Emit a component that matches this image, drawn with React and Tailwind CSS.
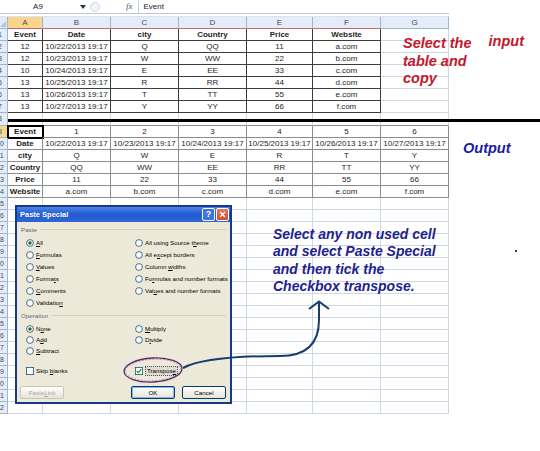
import React from 'react'

const colW = ['w-[35px]', 'w-[68px]', 'w-[68px]', 'w-[68px]', 'w-[66px]', 'w-[68px]', 'w-[68px]']
const letters = ['A', 'B', 'C', 'D', 'E', 'F', 'G']

const input = [
  ['Event', 'Date', 'city', 'Country', 'Price', 'Website'],
  ['12', '10/22/2013 19:17', 'Q', 'QQ', '11', 'a.com'],
  ['12', '10/23/2013 19:17', 'W', 'WW', '22', 'b.com'],
  ['10', '10/24/2013 19:17', 'E', 'EE', '33', 'c.com'],
  ['13', '10/25/2013 19:17', 'R', 'RR', '44', 'd.com'],
  ['13', '10/26/2013 19:17', 'T', 'TT', '55', 'e.com'],
  ['13', '10/27/2013 19:17', 'Y', 'YY', '66', 'f.com'],
]

const output = input[0].map((label, c) => [
  label,
  ...input.slice(1).map((row, r) => (c === 0 ? String(r + 1) : row[c])),
])

function RowHead({ n, active }) {
  return (
    <div
      className={
        'h-full w-[8px] shrink-0 overflow-hidden border-r border-b border-[#9eb6ce] text-[7px] leading-[11px] text-[#3b4b63] ' +
        (active ? 'bg-[#f8d68e]' : 'bg-[#e4ecf7]')
      }
    >
      <div className="-ml-[10px] w-[20px] text-center">{n}</div>
    </div>
  )
}

function Cell({ c, text, bold, tone, active }) {
  let border = 'border-r border-b border-[#d0d7e5]'
  if (tone === 'in') border = 'border-r border-b border-[#3c3c3c]'
  if (tone === 'out') border = 'border-r border-b border-[#8c8c8c]'
  return (
    <div
      className={
        colW[c] +
        ' h-full shrink-0 overflow-visible whitespace-nowrap text-center text-[8px] leading-[11px] text-[#1e1e1e] ' +
        border +
        (bold ? ' font-bold' : '') +
        (active ? ' outline-2 -outline-offset-1 outline-black' : '')
      }
    >
      {text}
    </div>
  )
}

function SheetRow({ n, cells, tone, boldFirst, boldAll, activeHead, activeFirst }) {
  return (
    <div className="flex h-[12px]">
      <RowHead n={n} active={activeHead} />
      {letters.map((_, c) => {
        const has = cells && c < cells.length
        return (
          <Cell
            key={c}
            c={c}
            text={has ? cells[c] : ''}
            bold={has && (boldAll || (boldFirst && c === 0))}
            tone={has ? tone : undefined}
            active={activeFirst && c === 0}
          />
        )
      })}
    </div>
  )
}

function Radio({ on }) {
  return (
    <svg width="8" height="8" viewBox="0 0 8 8" className="shrink-0">
      <circle cx="4" cy="4" r="3.4" fill="#fbfbf8" stroke="#1c5180" strokeWidth="0.8" />
      {on && <circle cx="4" cy="4" r="1.7" fill="#2f6b2f" />}
    </svg>
  )
}

function Check({ on }) {
  return (
    <svg width="8" height="8" viewBox="0 0 8 8" className="shrink-0">
      <rect x="0.4" y="0.4" width="7.2" height="7.2" fill="#fbfbf8" stroke="#1c5180" strokeWidth="0.8" />
      {on && <path d="M1.8 4 L3.3 5.6 L6.3 2.2" fill="none" stroke="#21a121" strokeWidth="1.3" />}
    </svg>
  )
}

function Opt({ on, pre, u, post, h }) {
  return (
    <div className={'flex items-center gap-[2px] whitespace-nowrap pl-[5px] ' + h}>
      <Radio on={on} />
      <span>
        {pre}
        <span className="underline">{u}</span>
        {post}
      </span>
    </div>
  )
}

function Btn({ children, disabled, def, className }) {
  return (
    <div
      className={
        'flex h-[13px] w-[44px] items-center justify-center whitespace-nowrap rounded-[2px] border bg-gradient-to-b from-white to-[#e6e3d6] ' +
        (disabled ? 'border-[#c9c7ba] text-[#aca899] ' : 'border-[#003c74] text-black ') +
        (def ? 'shadow-[inset_0_0_0_1px_#8fb3ea] ' : '') +
        (className || '')
      }
    >
      {children}
    </div>
  )
}

function Group({ label }) {
  return (
    <div className="flex items-center gap-[3px] text-[#5a6a8a]">
      <span>{label}</span>
      <div className="h-px flex-1 bg-[#d3d1c2]" />
    </div>
  )
}

function PasteSpecial() {
  return (
    <div className="absolute left-[15px] top-[205px] flex h-[199px] w-[217px] flex-col border-2 border-[#16388f] bg-[#ece9d8] font-['Liberation_Sans',sans-serif] text-[6.2px] text-black">
      <div className="flex h-[15px] shrink-0 items-center justify-between bg-gradient-to-b from-[#4b86e8] via-[#2459cf] to-[#2e66d8] pl-[3px] pr-[1px]">
        <span className="text-[7.5px] font-bold text-white">Paste Special</span>
        <div className="flex gap-[1px]">
          <div className="flex h-[13px] w-[13px] items-center justify-center rounded-[2px] border border-white bg-[#3d74e5] text-[9px] font-bold leading-none text-white">
            ?
          </div>
          <div className="flex h-[13px] w-[13px] items-center justify-center rounded-[2px] border border-white bg-gradient-to-b from-[#e9795c] to-[#d14a2a]">
            <svg width="7" height="7" viewBox="0 0 7 7">
              <path d="M1 1 L6 6 M6 1 L1 6" stroke="white" strokeWidth="1.4" />
            </svg>
          </div>
        </div>
      </div>

      <div className="flex flex-1 flex-col px-[4px] pb-[3px]">
        <div className="flex h-[15px] items-center">
          <div className="flex-1">
            <Group label="Paste" />
          </div>
        </div>
        <div className="grid grid-cols-[109px_1fr]">
          <Opt on pre="" u="A" post="ll" h="h-[12px]" />
          <Opt pre="All using Source t" u="h" post="eme" h="h-[12px]" />
          <Opt pre="" u="F" post="ormulas" h="h-[12px]" />
          <Opt pre="All e" u="x" post="cept borders" h="h-[12px]" />
          <Opt pre="" u="V" post="alues" h="h-[12px]" />
          <Opt pre="Column " u="w" post="idths" h="h-[12px]" />
          <Opt pre="Forma" u="t" post="s" h="h-[12px]" />
          <Opt pre="Fo" u="r" post="mulas and number formats" h="h-[12px]" />
          <Opt pre="" u="C" post="omments" h="h-[12px]" />
          <Opt pre="Val" u="u" post="es and number formats" h="h-[12px]" />
          <Opt pre="Validatio" u="n" post="" h="h-[12px]" />
          <div />
        </div>
        <div className="flex h-[14px] items-center">
          <div className="flex-1">
            <Group label="Operation" />
          </div>
        </div>
        <div className="grid grid-cols-[109px_1fr]">
          <Opt on pre="N" u="o" post="ne" h="h-[11px]" />
          <Opt pre="" u="M" post="ultiply" h="h-[11px]" />
          <Opt pre="A" u="d" post="d" h="h-[11px]" />
          <Opt pre="D" u="i" post="vide" h="h-[11px]" />
          <Opt pre="" u="S" post="ubtract" h="h-[11px]" />
          <div />
        </div>
        <div className="mt-[8px] grid h-[14px] grid-cols-[109px_1fr] items-center">
          <div className="flex items-center gap-[2px] whitespace-nowrap pl-[5px]">
            <Check />
            <span>
              Skip <span className="underline">b</span>lanks
            </span>
          </div>
          <div className="flex items-center gap-[2px] whitespace-nowrap pl-[5px]">
            <Check on />
            <span className="border border-dotted border-[#555] bg-[#dedbd0] px-[1px] leading-[8px]">
              Transpos<span className="underline">e</span>
            </span>
          </div>
        </div>
        <div className="mt-[8px] flex">
          <Btn disabled className="-ml-[1px]">
            Paste <span className="underline">L</span>ink
          </Btn>
          <Btn def className="ml-[67px]">
            OK
          </Btn>
          <Btn className="ml-[7px]">Cancel</Btn>
        </div>
      </div>
    </div>
  )
}

export default function App() {
  const blanks = Array.from({ length: 18 }, (_, i) => i + 15)
  return (
    <div className="relative h-[451px] w-[540px] overflow-hidden bg-white font-['Liberation_Sans',Arial,sans-serif]">
      <div className="flex w-[449px] flex-col">
        {/* formula bar */}
        <div className="flex h-[14px] items-center border-b border-[#b9c5da] bg-white text-[8px] text-[#222]">
          <div className="w-[76px] text-center">A9</div>
          <svg width="6" height="4" viewBox="0 0 6 4" className="ml-[4px]">
            <path d="M0 0 H6 L3 4 Z" fill="#333" />
          </svg>
          <div className="ml-[4px] h-[10px] w-[10px] rounded-full border border-[#cfd6e2] bg-[#f2f4f8]" />
          <span className="ml-[26px] font-['Liberation_Serif',serif] text-[9px] italic leading-none text-[#555]">fx</span>
          <div className="ml-[5px] flex h-full flex-1 items-center border-l border-[#c6cfdf] pl-[5px]">Event</div>
        </div>
        <div className="h-[3px] border-b border-[#dde3ee]" />

        {/* column headers */}
        <div className="flex h-[12px]">
          <div className="relative h-full w-[8px] shrink-0 border-r border-b border-[#9eb6ce] bg-[#e4ecf7]">
            <svg width="6" height="6" viewBox="0 0 6 6" className="absolute bottom-[1px] right-[1px]">
              <path d="M6 0 V6 H0 Z" fill="#b6c6da" />
            </svg>
          </div>
          {letters.map((l, c) => (
            <div
              key={l}
              className={
                colW[c] +
                ' h-full shrink-0 border-r border-b text-center text-[8px] leading-[11px] text-[#3b4b63] ' +
                (c === 0 ? 'bg-[#f8d68e] ' : 'bg-[#e4ecf7] ') +
                (c < 6 ? 'border-b-[#c9676a] border-r-[#9eb6ce]' : 'border-[#9eb6ce]')
              }
            >
              {l}
            </div>
          ))}
        </div>

        {input.map((row, r) => (
          <SheetRow key={r} n={r + 1} cells={row} tone="in" boldAll={r === 0} />
        ))}

        {/* row 8 with the divider */}
        <div className="flex h-[13px]">
          <RowHead n={8} />
          {letters.map((_, c) => (
            <div key={c} className={colW[c] + ' h-full shrink-0 border-r border-b border-r-[#d0d7e5] border-b-[#8c8c8c]'} />
          ))}
        </div>

        {output.map((row, r) => (
          <SheetRow key={r} n={r + 9} cells={row} tone="out" boldFirst activeHead={r === 0} activeFirst={r === 0} />
        ))}

        {blanks.map((n) => (
          <SheetRow key={n} n={n} />
        ))}
      </div>

      {/* thick divider across the page */}
      <div className="absolute left-[8px] right-0 top-[119px] h-[3px] bg-black" />

      {/* annotations */}
      <div className="absolute left-[403px] top-[35px] w-[121px] text-[14.5px] font-bold italic leading-[17.5px] text-[#c3172a]">
        <div className="flex justify-between">
          <span>Select the</span>
          <span className="-mt-[2px]">input</span>
        </div>
        <div>table and</div>
        <div>copy</div>
      </div>

      <div className="absolute left-[463px] top-[139px] text-[14.5px] font-bold italic leading-[18px] text-[#1c1ca6]">Output</div>

      <div className="absolute left-[273px] top-[226px] whitespace-nowrap text-[14px] font-bold italic leading-[17.3px] text-[#22228f]">
        Select any non used cell
        <br />
        and select Paste Special
        <br />
        and then tick the
        <br />
        Checkbox transpose.
      </div>

      <div className="absolute left-[515px] top-[250px] h-[2px] w-[2px] rounded-full bg-black" />

      <PasteSpecial />

      {/* ellipse and curved arrow */}
      <svg className="pointer-events-none absolute left-0 top-0" width="540" height="451" viewBox="0 0 540 451">
        <ellipse cx="153" cy="370" rx="29" ry="12" fill="none" stroke="#5b2a6e" strokeWidth="1.3" transform="rotate(-3 153 370)" />
        <ellipse cx="153" cy="370" rx="27.5" ry="10.8" fill="none" stroke="#8a5a9a" strokeWidth="0.6" strokeDasharray="2 1.5" transform="rotate(-3 153 370)" />
        <path d="M183 368 C 200 359 235 356 280 356 C 306 356 319 344 319 320 L 319 303" fill="none" stroke="#163d6e" strokeWidth="2" />
        <path d="M309 309 L 319 301.5 L 329 309" fill="none" stroke="#163d6e" strokeWidth="2" />
      </svg>
    </div>
  )
}
